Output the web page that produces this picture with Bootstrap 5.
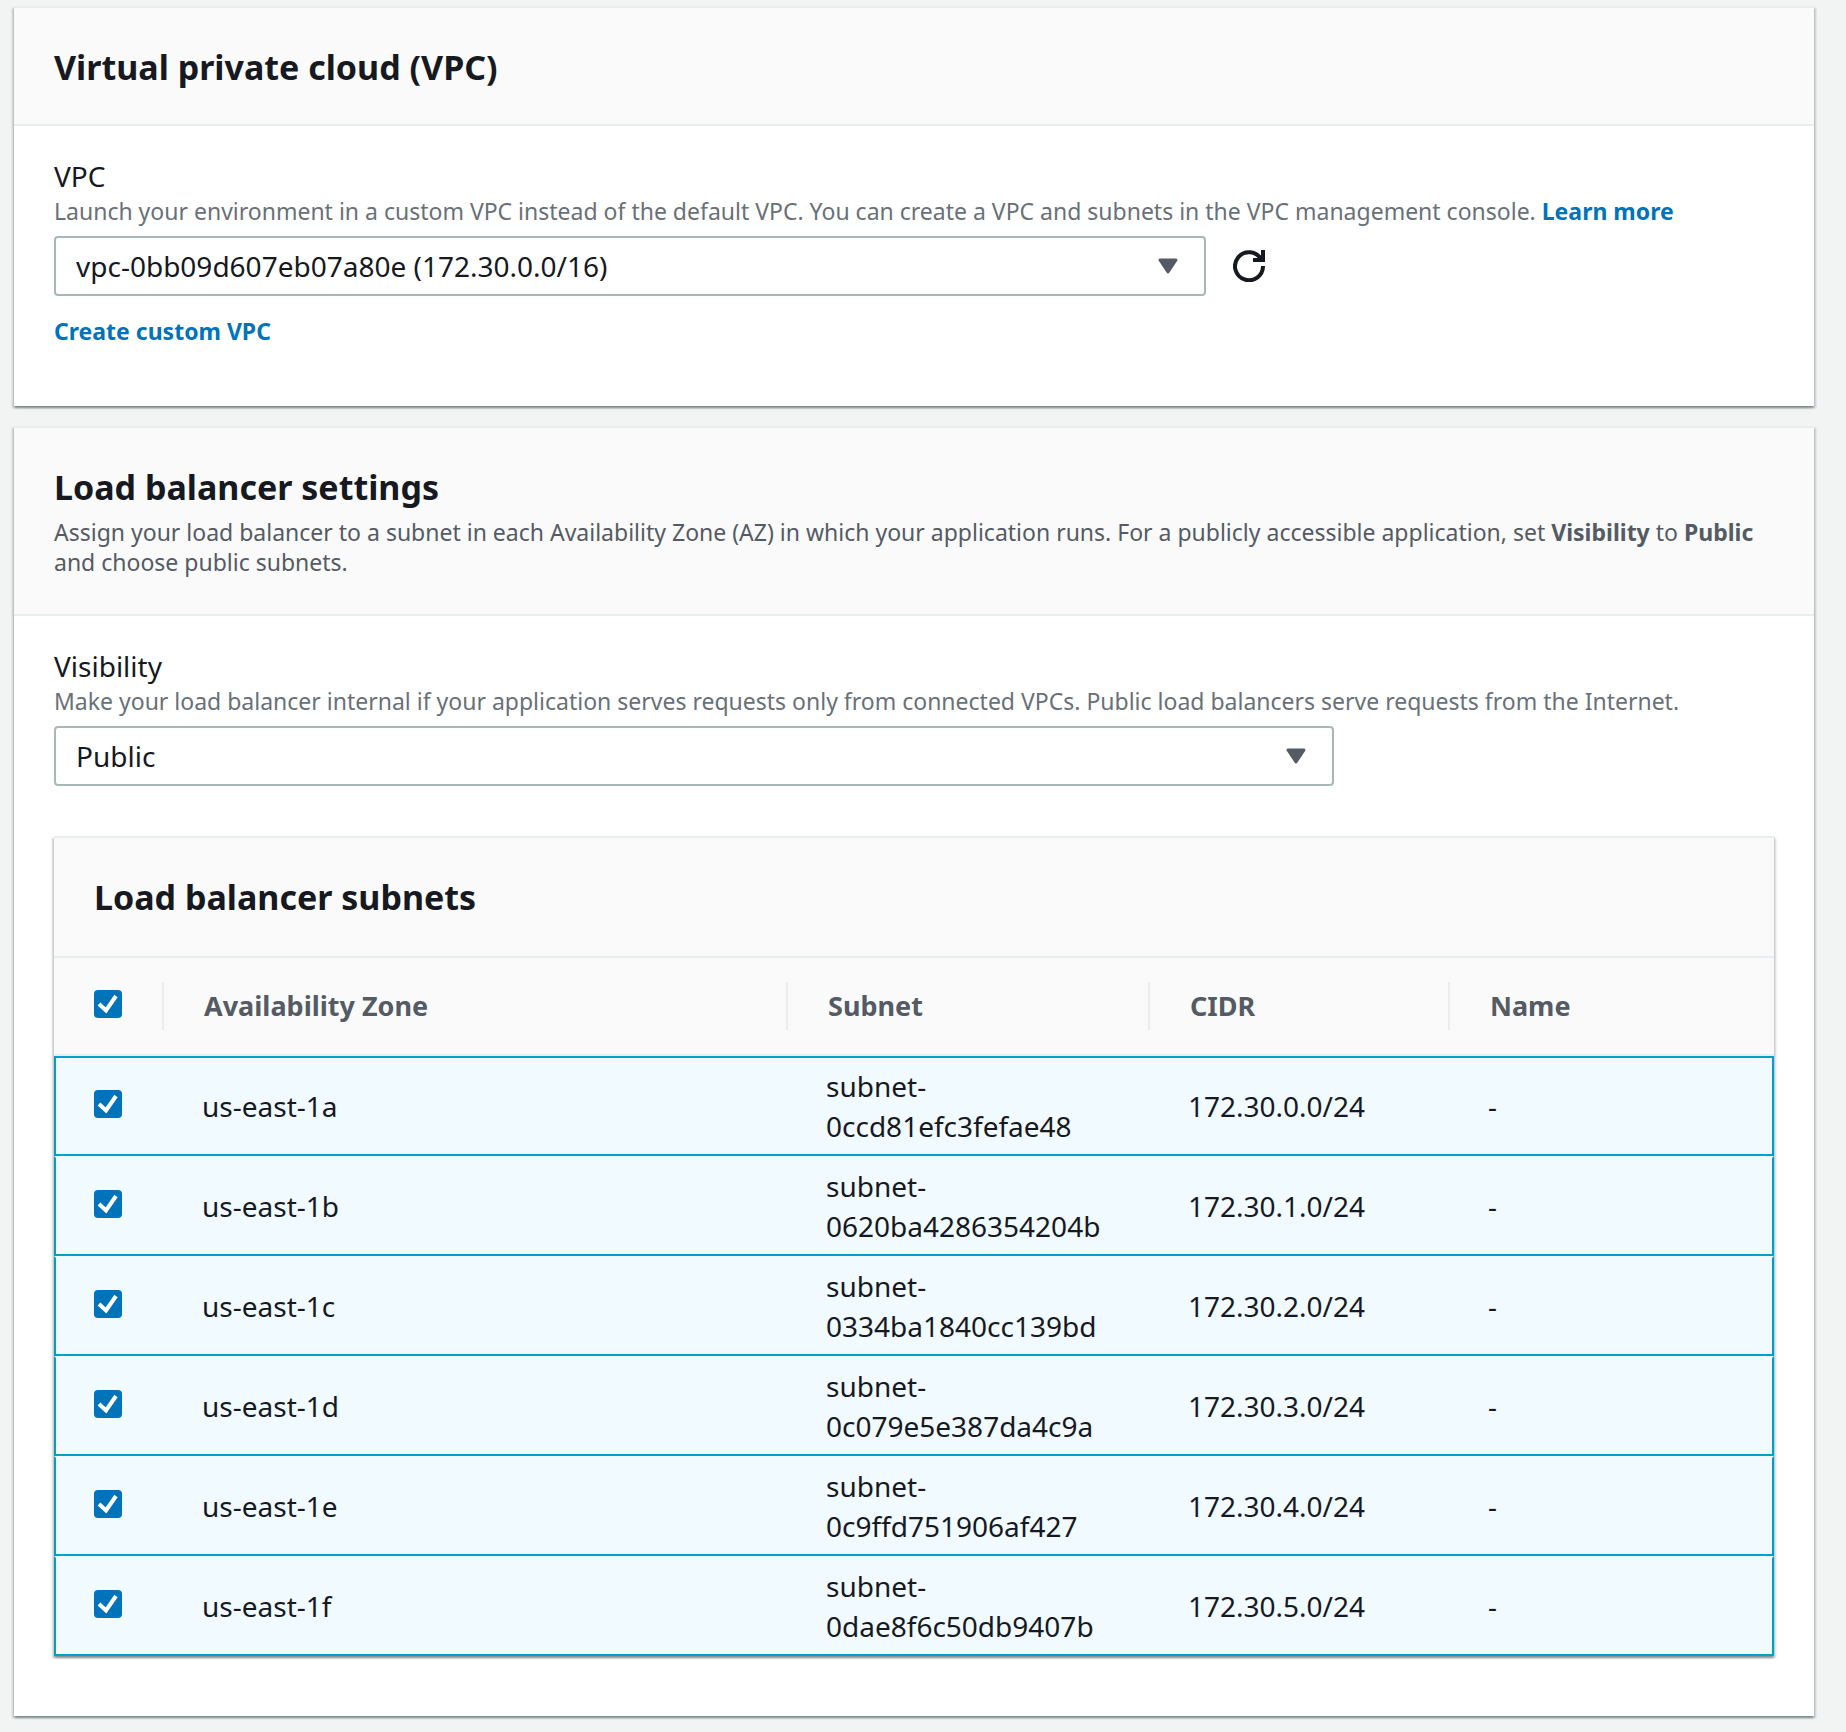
<!DOCTYPE html>
<html lang="en">
<head>
<meta charset="utf-8">
<meta name="viewport" content="width=device-width, initial-scale=1">
<title>Network configuration</title>
<link href="https://cdn.jsdelivr.net/npm/bootstrap@5.3.0/dist/css/bootstrap.min.css" rel="stylesheet">
<style>
  body { background: #f2f3f3; color: #16191f; font-family: "Noto Sans", "Open Sans", sans-serif; font-size: 28px; line-height: 40px; }
  .page { padding: 6px 32px 16px 14px; gap: 20px; }
  .panel { background: #fff; border: 0; border-top: 2px solid #eaeded; border-radius: 0;
    box-shadow: 0 2px 2px 0 rgba(0,28,36,.3), 2px 2px 2px 0 rgba(0,28,36,.15), -2px 2px 2px 0 rgba(0,28,36,.15); }
  .panel-head { background: #fafafa; border-bottom: 2px solid #eaeded; padding: 37px 40px 35px; }
  .panel-head-tall { padding-bottom: 37px; }
  .panel-body { padding: 32px 40px 60px; }
  .panel-title { font-size: 34px; line-height: 44px; font-weight: 700; margin: 0; }
  .panel-text { font-size: 23px; line-height: 30px; color: #545b64; margin: 8px 0 0; }
  .panel-text strong { font-weight: 700; }
  .field-label { display: block; line-height: 36px; margin: 0 0 2px; }
  .field-hint { font-size: 23px; line-height: 30px; color: #687078; margin: 0 0 10px; }
  .text-link { font-size: 23px; line-height: 30px; font-weight: 700; color: #0073bb; text-decoration: none; }
  .picker { height: 60px; border: 2px solid #aab7b8; border-radius: 4px; padding: 0 60px 0 20px; color: #16191f;
    font-size: 28px; line-height: 40px;
    background: #fff url("data:image/svg+xml,%3Csvg xmlns='http://www.w3.org/2000/svg' viewBox='0 0 20 16'%3E%3Cpath d='M2 2h16l-8 12z' fill='%23545b64' stroke='%23545b64' stroke-width='3' stroke-linejoin='round'/%3E%3C/svg%3E") no-repeat right 26px center / 20px 16px; }
  .picker-vpc { max-width: 1152px; }
  .picker-visibility { max-width: 1280px; }
  .picker-row { gap: 27px; }
  .refresh { width: 32px; height: 32px; line-height: 0; border: 0; color: #16191f; }
  .tick.form-check-input { width: 28px; height: 28px; margin: 0; border: 0; border-radius: 4px; float: none; display: block; }
  .tick.form-check-input:checked { background: #0073bb url("data:image/svg+xml,%3Csvg xmlns='http://www.w3.org/2000/svg' viewBox='0 0 28 28'%3E%3Cpath d='M5 14l7 6.500L22 6' fill='none' stroke='%23fff' stroke-width='4'/%3E%3C/svg%3E") center / 28px 28px; }
  .subnets { margin-top: 50px; }
  .subnet-table { table-layout: fixed; border-collapse: separate; border-spacing: 0; color: #16191f; --bs-table-bg: transparent; }
  .subnet-table col.pick { width: 110px; }
  .subnet-table col.zone { width: 624px; }
  .subnet-table col.subnet { width: 362px; }
  .subnet-table col.cidr { width: 300px; }
  .subnet-table thead th { height: 98px; padding: 0 40px; vertical-align: middle; font-size: 27px; font-weight: 700; color: #545b64;
    border-bottom: 2px solid #eaeded; background: #fafafa; }
  .subnet-table thead th:not(:last-child) { background: #fafafa linear-gradient(#eaeded, #eaeded) no-repeat right center / 2px 48px; }
  .subnet-table tbody td { height: 100px; padding: 0 38px; vertical-align: middle; background: #f1faff; color: #16191f;
    border-top: 2px solid #f1faff; border-bottom: 2px solid #00a1c9; }
  .subnet-table tbody tr:first-child td { border-top-color: #00a1c9; }
  .subnet-table tbody td:first-child { border-left: 2px solid #00a1c9; }
  .subnet-table tbody td:last-child { border-right: 2px solid #00a1c9; }
  .subnet-table thead th:first-child { padding: 0 0 4px 40px; }
  .subnet-table tbody td:first-child { padding: 0 0 4px 38px; }
</style>
</head>
<body>
<main class="page d-flex flex-column">
  <section class="card panel">
    <div class="panel-head"><h2 class="panel-title">Virtual private cloud (VPC)</h2></div>
    <div class="panel-body">
      <label class="field-label" for="vpc">VPC</label>
      <p class="field-hint">Launch your environment in a custom VPC instead of the default VPC. You can create a VPC and subnets in the VPC management console. <a class="text-link" href="#">Learn more</a></p>
      <div class="d-flex align-items-center picker-row">
        <select class="form-select picker picker-vpc" id="vpc"><option selected>vpc-0bb09d607eb07a80e (172.30.0.0/16)</option></select>
        <button class="btn refresh p-0" type="button" aria-label="Refresh">
          <svg width="32" height="32" viewBox="0 0 32 32" fill="none" stroke="currentColor" stroke-width="4" aria-hidden="true"><path d="M30 16A14 14 0 1 1 28 9"/><path d="M30 0v10H20"/><path d="M24 10l6-4v4z" fill="currentColor" stroke="none"/></svg>
        </button>
      </div>
      <div class="d-flex pt-3 mt-1"><a class="text-link" href="#">Create custom VPC</a></div>
    </div>
  </section>

  <section class="card panel">
    <div class="panel-head panel-head-tall">
      <h2 class="panel-title">Load balancer settings</h2>
      <p class="panel-text">Assign your load balancer to a subnet in each Availability Zone (AZ) in which your application runs. For a publicly accessible application, set <strong>Visibility</strong> to <strong>Public</strong> and choose public subnets.</p>
    </div>
    <div class="panel-body">
      <label class="field-label" for="visibility">Visibility</label>
      <p class="field-hint">Make your load balancer internal if your application serves requests only from connected VPCs. Public load balancers serve requests from the Internet.</p>
      <select class="form-select picker picker-visibility" id="visibility"><option selected>Public</option><option>Internal</option></select>

      <section class="card panel subnets">
        <div class="panel-head panel-head-tall"><h2 class="panel-title">Load balancer subnets</h2></div>
        <table class="table subnet-table mb-0">
          <colgroup><col class="pick"><col class="zone"><col class="subnet"><col class="cidr"><col></colgroup>
          <thead>
            <tr><th scope="col"><input class="form-check-input tick" type="checkbox" checked aria-label="Select all subnets"></th><th scope="col">Availability Zone</th><th scope="col">Subnet</th><th scope="col">CIDR</th><th scope="col">Name</th></tr>
          </thead>
          <tbody>
            <tr><td><input class="form-check-input tick" type="checkbox" checked aria-label="Select us-east-1a"></td><td>us-east-1a</td><td>subnet-0ccd81efc3fefae48</td><td>172.30.0.0/24</td><td>-</td></tr>
            <tr><td><input class="form-check-input tick" type="checkbox" checked aria-label="Select us-east-1b"></td><td>us-east-1b</td><td>subnet-0620ba4286354204b</td><td>172.30.1.0/24</td><td>-</td></tr>
            <tr><td><input class="form-check-input tick" type="checkbox" checked aria-label="Select us-east-1c"></td><td>us-east-1c</td><td>subnet-0334ba1840cc139bd</td><td>172.30.2.0/24</td><td>-</td></tr>
            <tr><td><input class="form-check-input tick" type="checkbox" checked aria-label="Select us-east-1d"></td><td>us-east-1d</td><td>subnet-0c079e5e387da4c9a</td><td>172.30.3.0/24</td><td>-</td></tr>
            <tr><td><input class="form-check-input tick" type="checkbox" checked aria-label="Select us-east-1e"></td><td>us-east-1e</td><td>subnet-0c9ffd751906af427</td><td>172.30.4.0/24</td><td>-</td></tr>
            <tr><td><input class="form-check-input tick" type="checkbox" checked aria-label="Select us-east-1f"></td><td>us-east-1f</td><td>subnet-0dae8f6c50db9407b</td><td>172.30.5.0/24</td><td>-</td></tr>
          </tbody>
        </table>
      </section>
    </div>
  </section>
</main>
<script src="https://cdn.jsdelivr.net/npm/bootstrap@5.3.0/dist/js/bootstrap.bundle.min.js"></script>
</body>
</html>
